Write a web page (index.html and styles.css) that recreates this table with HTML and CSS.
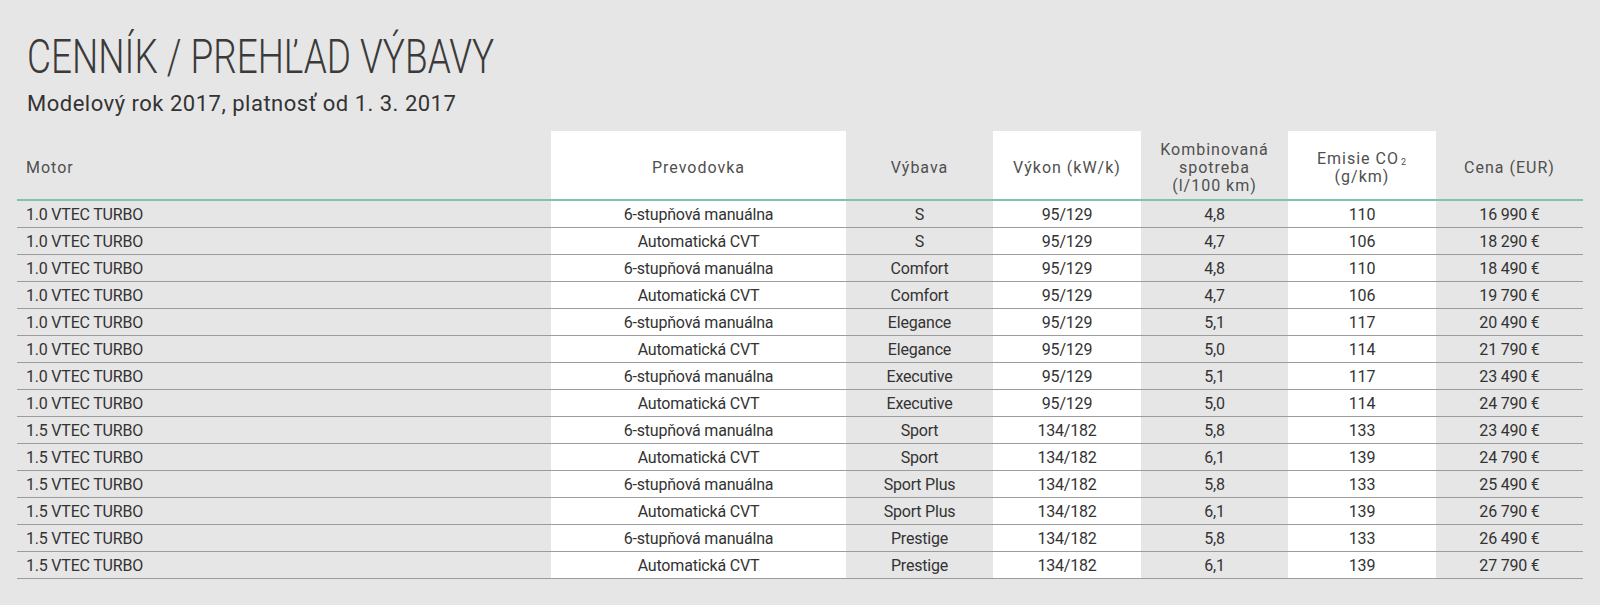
FILE: index.html
```html
<!DOCTYPE html>
<html lang="sk">
<head>
<meta charset="utf-8">
<title>Cenník / prehľad výbavy</title>
<link rel="stylesheet" href="styles.css">
</head>
<body>
<main class="page">
  <h1 class="title"><span class="title-text">CENNÍK / PREHĽAD VÝBAVY</span></h1>
  <p class="subtitle">Modelový rok 2017, platnosť od 1. 3. 2017</p>
  <table class="price-table">
    <colgroup>
      <col class="c-motor">
      <col class="c-gear">
      <col class="c-trim">
      <col class="c-power">
      <col class="c-cons">
      <col class="c-co2">
      <col class="c-price">
    </colgroup>
    <thead>
      <tr>
        <th class="left">Motor</th>
        <th class="white">Prevodovka</th>
        <th>Výbava</th>
        <th class="white">Výkon (kW/k)</th>
        <th>Kombinovaná<br>spotreba<br>(l/100 km)</th>
        <th class="white">Emisie CO<sub>2</sub><br>(g/km)</th>
        <th>Cena (EUR)</th>
      </tr>
    </thead>
    <tbody>
      <tr><td class="left">1.0 VTEC TURBO</td><td class="white">6-stupňová manuálna</td><td>S</td><td class="white">95/129</td><td>4,8</td><td class="white">110</td><td>16 990 €</td></tr>
      <tr><td class="left">1.0 VTEC TURBO</td><td class="white">Automatická CVT</td><td>S</td><td class="white">95/129</td><td>4,7</td><td class="white">106</td><td>18 290 €</td></tr>
      <tr><td class="left">1.0 VTEC TURBO</td><td class="white">6-stupňová manuálna</td><td>Comfort</td><td class="white">95/129</td><td>4,8</td><td class="white">110</td><td>18 490 €</td></tr>
      <tr><td class="left">1.0 VTEC TURBO</td><td class="white">Automatická CVT</td><td>Comfort</td><td class="white">95/129</td><td>4,7</td><td class="white">106</td><td>19 790 €</td></tr>
      <tr><td class="left">1.0 VTEC TURBO</td><td class="white">6-stupňová manuálna</td><td>Elegance</td><td class="white">95/129</td><td>5,1</td><td class="white">117</td><td>20 490 €</td></tr>
      <tr><td class="left">1.0 VTEC TURBO</td><td class="white">Automatická CVT</td><td>Elegance</td><td class="white">95/129</td><td>5,0</td><td class="white">114</td><td>21 790 €</td></tr>
      <tr><td class="left">1.0 VTEC TURBO</td><td class="white">6-stupňová manuálna</td><td>Executive</td><td class="white">95/129</td><td>5,1</td><td class="white">117</td><td>23 490 €</td></tr>
      <tr><td class="left">1.0 VTEC TURBO</td><td class="white">Automatická CVT</td><td>Executive</td><td class="white">95/129</td><td>5,0</td><td class="white">114</td><td>24 790 €</td></tr>
      <tr><td class="left">1.5 VTEC TURBO</td><td class="white">6-stupňová manuálna</td><td>Sport</td><td class="white">134/182</td><td>5,8</td><td class="white">133</td><td>23 490 €</td></tr>
      <tr><td class="left">1.5 VTEC TURBO</td><td class="white">Automatická CVT</td><td>Sport</td><td class="white">134/182</td><td>6,1</td><td class="white">139</td><td>24 790 €</td></tr>
      <tr><td class="left">1.5 VTEC TURBO</td><td class="white">6-stupňová manuálna</td><td>Sport Plus</td><td class="white">134/182</td><td>5,8</td><td class="white">133</td><td>25 490 €</td></tr>
      <tr><td class="left">1.5 VTEC TURBO</td><td class="white">Automatická CVT</td><td>Sport Plus</td><td class="white">134/182</td><td>6,1</td><td class="white">139</td><td>26 790 €</td></tr>
      <tr><td class="left">1.5 VTEC TURBO</td><td class="white">6-stupňová manuálna</td><td>Prestige</td><td class="white">134/182</td><td>5,8</td><td class="white">133</td><td>26 490 €</td></tr>
      <tr><td class="left">1.5 VTEC TURBO</td><td class="white">Automatická CVT</td><td>Prestige</td><td class="white">134/182</td><td>6,1</td><td class="white">139</td><td>27 790 €</td></tr>
    </tbody>
  </table>
</main>
</body>
</html>
```

FILE: styles.css
```css
* { box-sizing: border-box; }

html, body {
  margin: 0;
  padding: 0;
  background: #e6e6e6;
}

body {
  font-family: Roboto, "Liberation Sans", Arial, sans-serif;
  color: #333;
}

.page {
  padding: 33px 17px 0 17px;
}

.title {
  margin: 0 0 0 10px;
  font-size: 48px;
  line-height: 48px;
  font-weight: 300;
  color: #3a3a3a;
  white-space: nowrap;
}

.title-text {
  display: inline-block;
  transform: scaleX(0.77);
  transform-origin: left center;
}

.subtitle {
  margin: 10px 0 0 10px;
  font-size: 22px;
  line-height: 26px;
  font-weight: 400;
  letter-spacing: 0.5px;
  color: #333;
}

.price-table {
  margin-top: 14px;
  width: 1566px;
  border-collapse: collapse;
  table-layout: fixed;
}

.c-motor { width: 534px; }
.c-gear { width: 295px; }
.c-trim { width: 147px; }
.c-power { width: 148px; }
.c-cons { width: 147px; }
.c-co2 { width: 148px; }
.c-price { width: 147px; }

.price-table th {
  height: 69px;
  padding: 5px 0 0 0;
  font-size: 16px;
  line-height: 18px;
  font-weight: 400;
  letter-spacing: 1px;
  color: #4f4f4f;
  text-align: center;
  vertical-align: middle;
  border-bottom: 2px solid #80c2aa;
}

.price-table th sub {
  font-size: 9px;
  line-height: 0;
  vertical-align: -1px;
  margin-left: 2px;
}

.price-table td {
  height: 27px;
  padding: 3px 0 0 0;
  font-size: 16px;
  line-height: 18px;
  letter-spacing: -0.2px;
  color: #333;
  text-align: center;
  vertical-align: middle;
  border-bottom: 1px solid #9c9c9c;
}

.price-table td.left,
.price-table th.left {
  text-align: left;
  padding-left: 9px;
}

.price-table .white {
  background: #fff;
}
```
